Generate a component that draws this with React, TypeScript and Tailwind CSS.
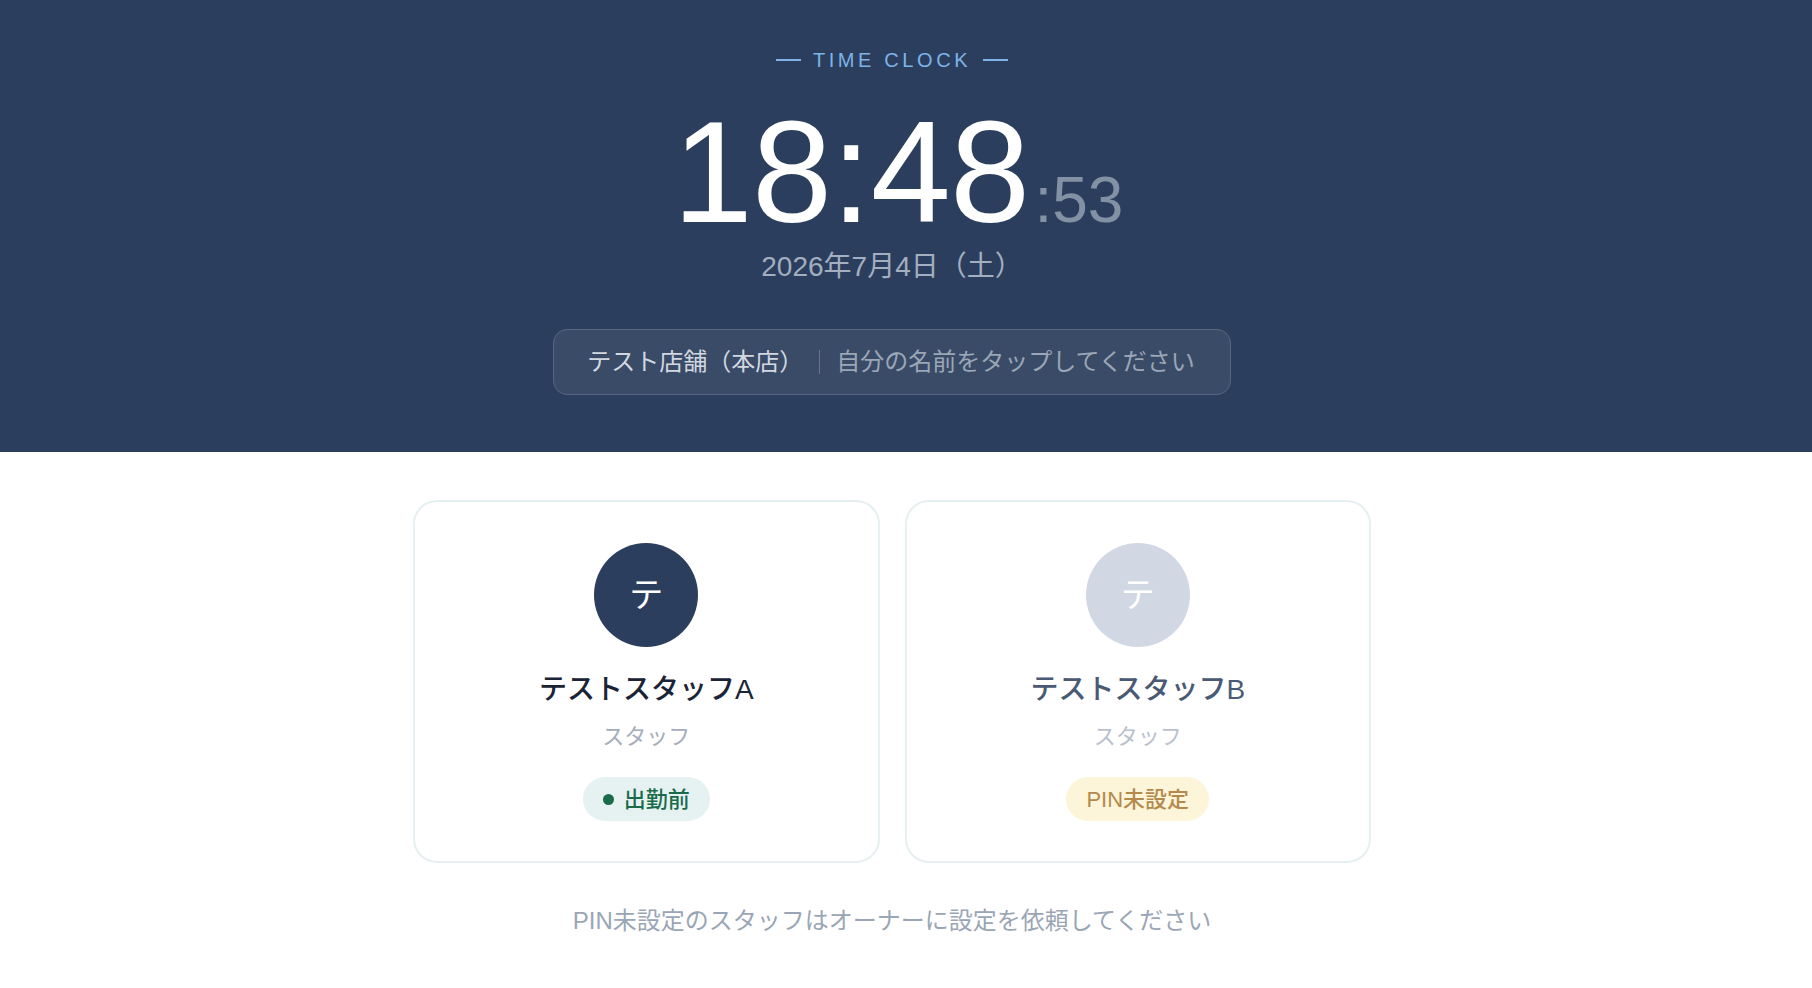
import React from "react";

const FONT = '"Liberation Sans", "Noto Sans CJK JP", sans-serif';

function StaffCard({
  initial,
  name,
  role,
  active,
}: {
  initial: string;
  name: string;
  role: string;
  active: boolean;
}) {
  return (
    <div className="flex h-[363px] flex-col items-center rounded-[24px] border-2 border-[#e6eff1] bg-white pt-[41px]">
      <div
        className={
          active
            ? "flex h-[104px] w-[104px] items-center justify-center rounded-full bg-[#2c3e5d] text-[34px] text-white"
            : "flex h-[104px] w-[104px] items-center justify-center rounded-full bg-[#d2d8e3] text-[34px] text-white"
        }
      >
        {initial}
      </div>
      <div
        className={
          active
            ? "mt-[25px] text-[28px] leading-[36px] font-medium text-[#1b2436]"
            : "mt-[25px] text-[28px] leading-[36px] font-medium text-[#4a5a74]"
        }
      >
        {name}
      </div>
      <div
        className={
          active
            ? "mt-[14px] text-[22px] leading-[30px] text-[#a3adbb]"
            : "mt-[14px] text-[22px] leading-[30px] text-[#b9c1cc]"
        }
      >
        {role}
      </div>
      {active ? (
        <div className="mt-[25px] flex h-[44px] items-center gap-[10px] rounded-full bg-[#e6f2f2] px-5 text-[22px] font-medium text-[#1a6b4b]">
          <span className="h-[11px] w-[11px] rounded-full bg-[#1a6b4b]" />
          <span>出勤前</span>
        </div>
      ) : (
        <div className="mt-[25px] flex h-[44px] items-center rounded-full bg-[#fdf5da] px-5 text-[22px] font-medium text-[#b38a4c]">
          PIN未設定
        </div>
      )}
    </div>
  );
}

export default function App() {
  return (
    <div className="min-h-screen bg-white" style={{ fontFamily: FONT }}>
      <header className="bg-[#2c3e5d] pt-[46px] pb-[57px]">
        <div className="flex flex-col items-center pr-7">
          <div className="flex items-center gap-3">
            <span className="h-[2px] w-[25px] bg-[#7db3e8]" />
            <span className="text-[20px] leading-[28px] tracking-[0.18em] text-[#7db3e8]">
              TIME CLOCK
            </span>
            <span className="h-[2px] w-[25px] bg-[#7db3e8]" />
          </div>
          <div className="mt-[27px] ml-[12px] flex items-baseline">
            <span className="text-[144px] leading-none tracking-[-0.005em] text-white">
              18:48
            </span>
            <span className="ml-[5px] text-[64px] leading-none text-[#8391a5]">:53</span>
          </div>
          <div className="mt-[4px] text-[28px] leading-[36px] text-[#a3aec0]">
            2026年7月4日（土）
          </div>
          <div className="mt-[44px] flex h-[66px] items-center rounded-[14px] border border-[#56657e] bg-[#3a4b68] pl-[33px] pr-[35px] text-[24px] leading-[32px]">
            <span className="text-[#d2d8e0]">テスト店舗（本店）</span>
            <span className="mx-[16px] h-[24px] w-px bg-[#66758c]" />
            <span className="text-[#9ba6b6]">自分の名前をタップしてください</span>
          </div>
        </div>
      </header>
      <main className="flex flex-col items-center pr-7">
        <div className="mt-[48px] grid w-[958px] grid-cols-2 gap-[25px]">
          <StaffCard initial="テ" name="テストスタッフA" role="スタッフ" active />
          <StaffCard initial="テ" name="テストスタッフB" role="スタッフ" active={false} />
        </div>
        <p className="mt-[40px] text-[24px] leading-[36px] text-[#9aa6b5]">
          PIN未設定のスタッフはオーナーに設定を依頼してください
        </p>
      </main>
    </div>
  );
}
